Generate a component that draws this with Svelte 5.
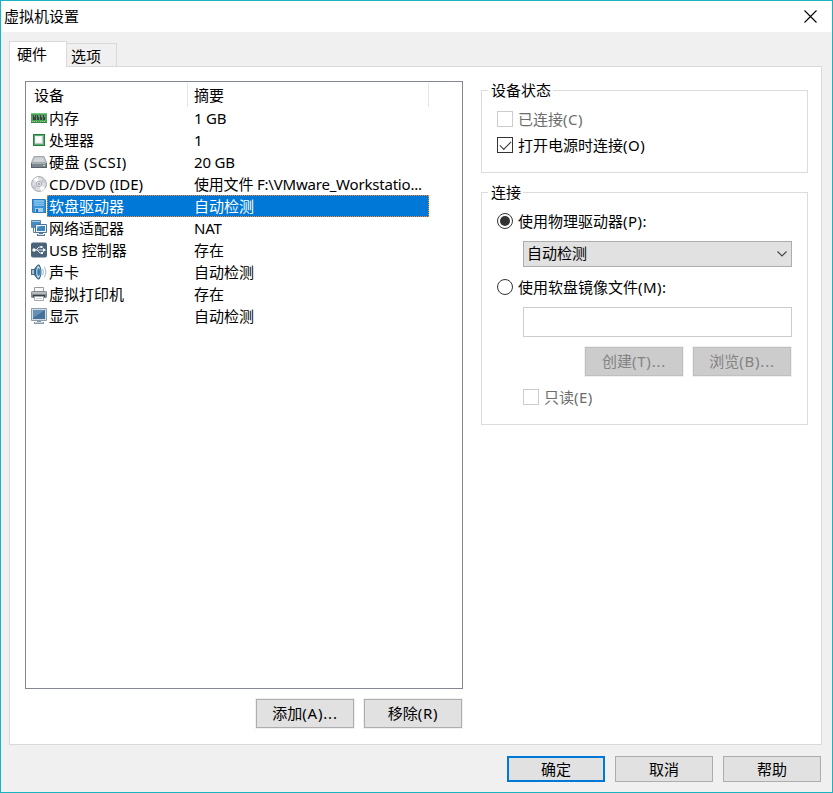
<script lang="ts">
  type Device = { icon: string; name: string; summary: string };

  const devices: Device[] = [
    { icon: "memory", name: "内存", summary: "1 GB" },
    { icon: "cpu", name: "处理器", summary: "1" },
    { icon: "disk", name: "硬盘 (SCSI)", summary: "20 GB" },
    { icon: "cd", name: "CD/DVD (IDE)", summary: "使用文件 F:\\VMware_Workstatio..." },
    { icon: "floppy", name: "软盘驱动器", summary: "自动检测" },
    { icon: "network", name: "网络适配器", summary: "NAT" },
    { icon: "usb", name: "USB 控制器", summary: "存在" },
    { icon: "sound", name: "声卡", summary: "自动检测" },
    { icon: "printer", name: "虚拟打印机", summary: "存在" },
    { icon: "display", name: "显示", summary: "自动检测" },
  ];

  let selected = $state("floppy");
  let connectAtPowerOn = $state(true);
  let source = $state("physical");
</script>

{#snippet deviceIcon(name: string)}
  <svg class="icon" width="16" height="16" viewBox="0 0 16 16">
    {#if name === "memory"}
      <path d="M0 3h16v10H0z" fill="#46a552" />
      <path d="M0 3h16v1H0z" fill="#79c783" />
      <path d="M2 5h3v5H2zM6 5h2v5H6zM9 5h2v5H9zM12 5h2v5h-2z" fill="#3d3d44" />
      <path d="M3 5h1v2H3zM7 5h1v2H7zM10 5h1v2h-1zM13 5h1v2h-1z" fill="#888a94" />
      <path d="M0 12h7v1H0zM8 12h8v1H8z" fill="#2f8145" />
      <path d="M1 11h1v1H1zM3 11h1v1H3zM5 11h1v1H5zM9 11h1v1H9zM11 11h1v1h-1zM13 11h1v1h-1z" fill="#b6ca79" />
    {:else if name === "cpu"}
      <path d="M2 2h12v12H2z" fill="#247b3e" />
      <path d="M3 3h10v10H3z" fill="#5bae6c" />
      <path d="M4 4h8v8H4z" fill="#f1f1f3" />
      <path d="M4 11h8v1H4zM11 4h1v8h-1z" fill="#c3c5c8" />
      <path d="M5 5h5v5H5z" fill="#fcfcfc" />
    {:else if name === "disk"}
      <path d="M3 2.5h10l2.5 6H.5z" fill="#c3c7cd" stroke="#a3a8ae" />
      <path d="M4 4h8l1.5 4h-11z" fill="#d1d4d8" />
      <path d="M0 9h16v5H0z" fill="#58616c" />
      <path d="M1 10h14v3H1z" fill="#7c8691" />
      <path d="M1 9h14v1H1z" fill="#a8b0b8" />
      <path d="M12 11h2v1h-2z" fill="#b7ed78" />
    {:else if name === "cd"}
      <circle cx="8" cy="8" r="7.4" fill="#dcdfe2" stroke="#a2a6ac" />
      <path d="M8 8L2.5 3.5A7 7 0 0 1 7 1zM8 8l6 4a7 7 0 0 1-4 3z" fill="#fff" />
      <path d="M8 8l4-6a7 7 0 0 1 3 4zM8 8l-7 2a7 7 0 0 0 3 3.5z" fill="#c8ccd2" />
      <circle cx="8" cy="8" r="2.7" fill="#eceef0" stroke="#b1b6bc" />
      <circle cx="8" cy="8" r="1" fill="#fff" stroke="#777f89" stroke-width=".7" />
    {:else if name === "floppy"}
      <path d="M1 1h13l1 1v13H2l-1-1z" fill="#2e7cbd" />
      <path d="M2 2h12v12H2z" fill="#3c92d6" />
      <path d="M3 2h10v6H3z" fill="#7dbdeb" />
      <path d="M3 4h10v1H3zM3 6h10v1H3z" fill="#63aee2" />
      <path d="M4 10h8v4H4z" fill="#9fcdec" />
      <path d="M5 11h2v3H5z" fill="#2371ac" />
    {:else if name === "network"}
      <path d="M.5.5h9v7h-9z" fill="#4789c1" stroke="#5c87ab" />
      <path d="M1 1h8v1H1z" fill="#9dc9e8" />
      <path d="M2.5 8v4.5H5" fill="none" stroke="#6d7f8f" />
      <path d="M4.5 4.5h11v8h-11z" fill="#eaf4fb" stroke="#4b7499" />
      <path d="M6 6h8v5H6z" fill="#3e83bc" />
      <path d="M6 8l4-2H6z" fill="#8bbde2" />
      <path d="M8 13h4v1h2v2H6v-2h2z" fill="#5b7890" />
      <path d="M7 14h6v1H7z" fill="#d6e3ec" />
    {:else if name === "usb"}
      <rect width="16" height="15" y=".5" rx="2" fill="#4c637c" />
      <path d="M3 8h10M5 8l3-3h2M6 8l3 3h2" fill="none" stroke="#dfe5eb" />
      <circle cx="3" cy="8" r="1.7" fill="#fff" />
      <path d="M12 6l3 2-3 2zM9.5 4h2v2h-2zM10 10h2v2h-2z" fill="#fff" />
    {:else if name === "sound"}
      <path d="M0 5h3l4-4.5 2 .5v14l-2 .5L3 11H0z" fill="#476d8e" />
      <path d="M1 6h2v4H1z" fill="#a7c2d6" />
      <ellipse cx="7.3" cy="8" rx="2.7" ry="6.8" fill="#b9d2e5" stroke="#2d587c" />
      <ellipse cx="7.7" cy="8" rx="1.4" ry="3.8" fill="#347fb5" />
      <path d="M11.5 5q2 3 0 6M13.5 3q3 5 0 10" fill="none" stroke="#a3b8c8" />
    {:else if name === "printer"}
      <path d="M3.5 1.5h9v5h-9z" fill="#f8f8f8" stroke="#989ca2" />
      <rect y="5" width="16" height="7" rx="1.5" fill="#858a91" />
      <path d="M1 6h14v2H1z" fill="#b8bbbf" />
      <path d="M2 9h12v2H2z" fill="#3b3f46" />
      <path d="M3.5 10.5h9v4h-9z" fill="#fff" stroke="#a5a9af" />
      <path d="M5 12h6v1H5z" fill="#cfd1d4" />
    {:else}
      <path d="M.5.5h15v12H.5z" fill="#d3dde5" stroke="#8b9dad" />
      <path d="M2 2h12v9H2z" fill="#46719b" />
      <path d="M2 2h12L2 10z" fill="#6590b8" />
      <path d="M6 13h4v1h3v2H3v-2h3z" fill="#8797a5" />
      <path d="M4 14h8v1H4z" fill="#c4ced6" />
    {/if}
  </svg>
{/snippet}

<div class="window">
  <header class="titlebar">
    <span class="caption">虚拟机设置</span>
    <svg class="close" width="13" height="13" viewBox="0 0 13 13">
      <path d="M.5.5l12 12M12.5.5l-12 12" stroke="#000" stroke-width="1.1" />
    </svg>
  </header>

  <nav class="tabs">
    <div class="tab active">硬件</div>
    <div class="tab">选项</div>
  </nav>

  <main class="page">
    <section class="hardware">
      <div class="list">
        <div class="list-head">
          <span class="col-device">设备</span>
          <span class="col-summary">摘要</span>
        </div>
        {#each devices as device (device.icon)}
          <div
            class="row"
            class:selected={selected === device.icon}
            role="option"
            tabindex="-1"
            aria-selected={selected === device.icon}
            onclick={() => (selected = device.icon)}
            onkeydown={() => {}}
          >
            {@render deviceIcon(device.icon)}
            <div class="cells">
              <span class="name" class:wide={device.icon === "disk"}>{device.name}</span>
              <span class="summary" class:latin={/[A-Z]/.test(device.summary)}>{device.summary}</span>
            </div>
          </div>
        {/each}
      </div>
      <div class="list-actions">
        <button class="btn tall">添加<span class="key">(A)...</span></button>
        <button class="btn tall">移除<span class="key">(R)</span></button>
      </div>
    </section>

    <section class="settings">
      <div class="group status">
        <h3>设备状态</h3>
        <label class="option disabled">
          <input type="checkbox" disabled />
          <span>已连接<span class="key">(C)</span></span>
        </label>
        <label class="option second">
          <input type="checkbox" bind:checked={connectAtPowerOn} />
          <span>打开电源时连接<span class="key">(O)</span></span>
        </label>
      </div>

      <div class="group connection">
        <h3>连接</h3>
        <label class="option">
          <input type="radio" value="physical" bind:group={source} />
          <span>使用物理驱动器<span class="key">(P):</span></span>
        </label>
        <div class="combo">
          <span>自动检测</span>
          <svg width="10" height="6" viewBox="0 0 10 6">
            <path d="M.5.5L5 5 9.5.5" fill="none" stroke="#444" stroke-width="1.1" />
          </svg>
        </div>
        <label class="option">
          <input type="radio" value="image" bind:group={source} />
          <span>使用软盘镜像文件<span class="key">(M):</span></span>
        </label>
        <div class="field"></div>
        <div class="file-actions">
          <button class="btn tall" disabled>创建<span class="key">(T)...</span></button>
          <button class="btn tall" disabled>浏览<span class="key">(B)...</span></button>
        </div>
        <label class="option disabled readonly">
          <input type="checkbox" disabled />
          <span>只读<span class="key">(E)</span></span>
        </label>
      </div>
    </section>
  </main>

  <footer class="footer">
    <button class="btn primary">确定</button>
    <button class="btn">取消</button>
    <button class="btn">帮助</button>
  </footer>
</div>

<style>
  :global(body) {
    margin: 0;
  }
  .window,
  .window * {
    box-sizing: border-box;
  }
  .window {
    width: 833px;
    height: 793px;
    display: flex;
    flex-direction: column;
    border: 1px solid #18b4bf;
    background: #f0f0f0;
    color: #000;
    font: 15px/22px "Noto Sans", "Noto Sans CJK SC", sans-serif;
    white-space: nowrap;
    overflow: hidden;
  }
  .titlebar {
    height: 31px;
    flex: none;
    display: flex;
    align-items: center;
    justify-content: space-between;
    padding: 0 15px 0 3px;
    background: #fff;
  }
  .caption {
    padding-bottom: 2px;
  }
  .tabs {
    height: 34px;
    flex: none;
    display: flex;
    align-items: flex-end;
    padding-left: 8px;
  }
  .tab {
    width: 50px;
    height: 23px;
    padding-left: 4px;
    line-height: 24px;
    border: 1px solid #d9d9d9;
    border-left: 0;
    border-bottom: 0;
  }
  .tab.active {
    width: 58px;
    height: 26px;
    margin-bottom: -1px;
    padding-left: 7px;
    border-left: 1px solid #d9d9d9;
    background: #fff;
    z-index: 1;
  }
  .page {
    width: 813px;
    height: 679px;
    flex: none;
    display: flex;
    align-items: flex-start;
    gap: 18px;
    margin-left: 8px;
    padding: 14px 13px 0 15px;
    border: 1px solid #d9d9d9;
    background: #fff;
  }
  .hardware {
    width: 438px;
  }
  .list {
    height: 608px;
    padding-top: 1px;
    border: 1px solid #828790;
  }
  .list-head {
    display: flex;
    height: 24px;
    line-height: 24px;
  }
  .col-device {
    width: 162px;
    padding-left: 8px;
    border-right: 1px solid #e5e5e5;
  }
  .col-summary {
    width: 241px;
    padding-left: 6px;
    border-right: 1px solid #e5e5e5;
  }
  .row {
    display: flex;
    align-items: center;
    width: 403px;
    height: 22px;
    padding-left: 5px;
  }
  .icon {
    flex: none;
  }
  .cells {
    flex: 1;
    display: flex;
    height: 22px;
    padding-left: 2px;
    line-height: 22px;
  }
  .name {
    width: 145px;
  }
  .wide {
    letter-spacing: 0.4px;
  }
  .latin {
    letter-spacing: -0.2px;
  }
  .selected .cells {
    background: #0078d7;
    color: #fff;
    outline: 1px dotted #ff8728;
    outline-offset: -1px;
  }
  .list-actions {
    display: flex;
    justify-content: flex-end;
    gap: 10px;
    margin-top: 10px;
    padding-right: 1px;
  }
  .btn {
    width: 98px;
    height: 26px;
    padding: 0;
    border: 1px solid #adadad;
    border-radius: 0;
    background: #e1e1e1;
    color: #000;
    font: inherit;
    line-height: 22px;
  }
  .btn.tall {
    height: 29px;
    padding-bottom: 1px;
    box-shadow: 0 0 0 1px #f0f0f0;
  }
  .btn .key {
    letter-spacing: 0.8px;
  }
  .btn.primary {
    border: 2px solid #0078d7;
  }
  .btn:disabled {
    border-color: #bfbfbf;
    background: #ccc;
    color: #838383;
  }
  .settings {
    width: 327px;
    padding-top: 9px;
  }
  .group {
    padding-left: 15px;
    border: 1px solid #dcdcdc;
  }
  .group h3 {
    width: fit-content;
    height: 22px;
    margin: -12px 0 0 -9px;
    padding: 0 2px 0 3px;
    background: #fff;
    font: inherit;
  }
  .status {
    height: 83px;
  }
  .connection {
    height: 233px;
    margin-top: 19px;
  }
  .option {
    display: flex;
    align-items: center;
    gap: 5px;
    height: 22px;
  }
  .option > span {
    margin-top: -1px;
  }
  .option .key {
    letter-spacing: 0.5px;
  }
  .status .option {
    margin-top: 7px;
  }
  .status .second {
    margin-top: 4px;
  }
  .connection .option {
    margin-top: 7px;
  }
  .disabled {
    color: #6d6d6d;
  }
  input {
    appearance: none;
    width: 16px;
    height: 16px;
    flex: none;
    display: grid;
    place-items: center;
    margin: 0;
    border: 1px solid #333;
    background: #fff;
  }
  input:disabled {
    border-color: #ccc;
  }
  input[type="checkbox"]:checked::before {
    content: "";
    width: 10px;
    height: 5px;
    margin-top: -3px;
    border: solid #333;
    border-width: 0 0 1.4px 1.4px;
    transform: rotate(-45deg);
  }
  input[type="radio"] {
    border-radius: 50%;
  }
  input[type="radio"]:checked::before {
    content: "";
    width: 10px;
    height: 10px;
    border-radius: 50%;
    background: #333;
  }
  .combo {
    width: 269px;
    height: 26px;
    display: flex;
    align-items: center;
    justify-content: space-between;
    margin: 9px 0 0 26px;
    padding: 0 4px 0 3px;
    border: 1px solid #adadad;
    background: #e1e1e1;
  }
  .combo span {
    margin-top: -2px;
  }
  .connection .combo + .option {
    margin-top: 9px;
  }
  .field {
    width: 269px;
    height: 30px;
    margin: 9px 0 0 26px;
    border: 1px solid #ccc;
  }
  .file-actions {
    display: flex;
    gap: 10px;
    margin: 10px 0 0 88px;
  }
  .connection .readonly {
    margin: 10px 0 0 26px;
  }
  .footer {
    display: flex;
    justify-content: flex-end;
    gap: 10px;
    padding: 11px 11px 0 0;
  }
  .footer .btn {
    padding-bottom: 1px;
  }
</style>
